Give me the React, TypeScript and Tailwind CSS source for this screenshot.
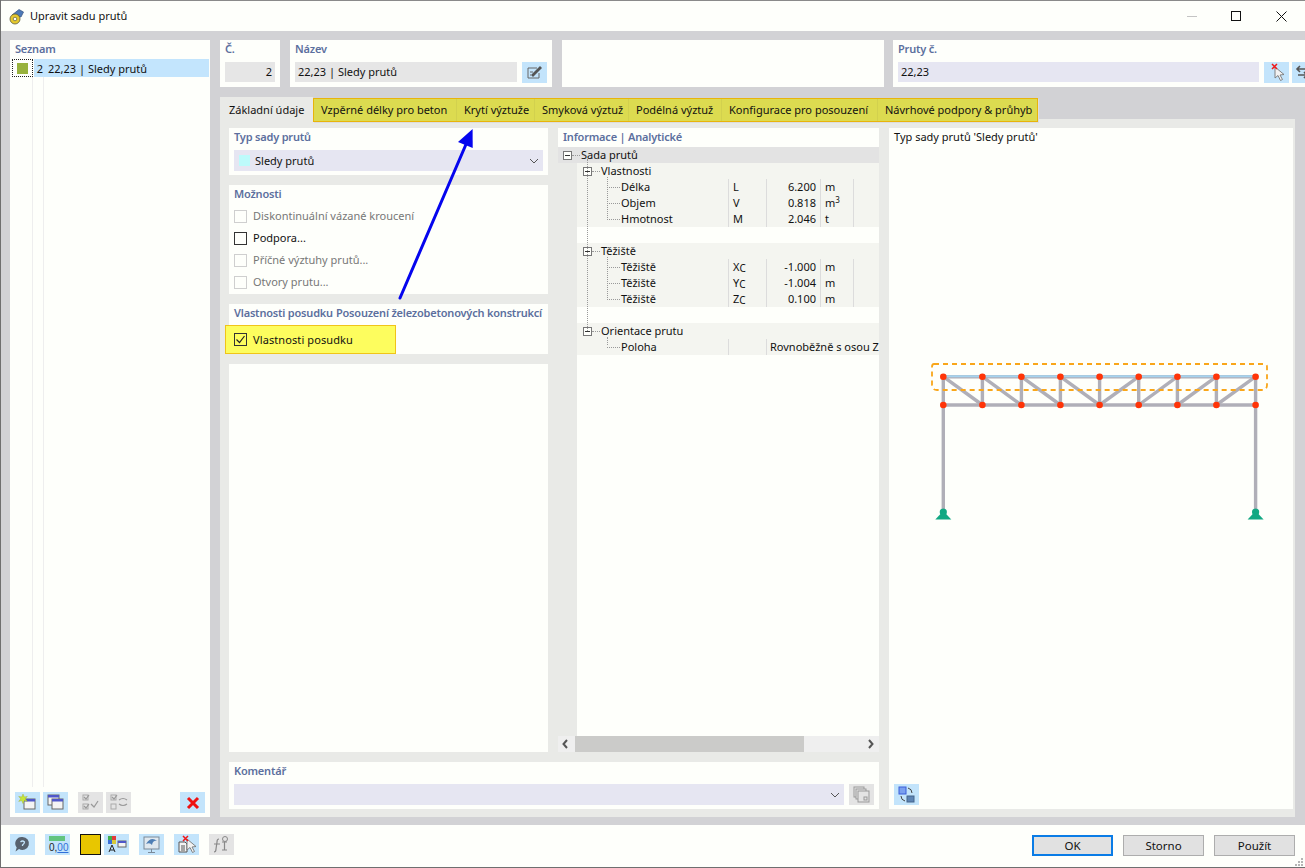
const font = { fontFamily: '"Noto Sans", sans-serif' };

function Check({ on, dim }: { on?: boolean; dim?: boolean }) {
  return (
    <span className={`w-[13px] h-[13px] shrink-0 border flex items-center justify-center ${dim ? "border-[#cfcfcf]" : "border-[#333333]"}`}>
      {on && (
        <svg width="11" height="11" viewBox="0 0 11 11">
          <path d="M1.5 5.5 L4.5 8.5 L9.5 2" fill="none" stroke="#222" strokeWidth="1.2" />
        </svg>
      )}
    </span>
  );
}

function Heading({ children }: { children: React.ReactNode }) {
  return <div className="h-[18px] leading-[16px] font-semibold tracking-[-0.2px] text-[#5c6f9e] whitespace-nowrap">{children}</div>;
}

function Chevron() {
  return (
    <svg width="10" height="6" viewBox="0 0 10 6" className="shrink-0">
      <path d="M1 1 L5 5 L9 1" fill="none" stroke="#555" strokeWidth="1" />
    </svg>
  );
}

function IconBtn({ children, off }: { children: React.ReactNode; off?: boolean }) {
  return (
    <div className={`w-[25px] h-[21px] shrink-0 flex items-center justify-center ${off ? "bg-[#e4e4e4]" : "bg-[#c3e4fb]"}`}>
      {children}
    </div>
  );
}

function WinIcon({ x = 5, y = 6 }: { x?: number; y?: number }) {
  return (
    <>
      <rect x={x} y={y} width="11" height="10" fill="#f4f4f4" stroke="#666" />
      <rect x={x} y={y} width="11" height="2.5" fill="#4f57c9" />
    </>
  );
}

function Cursor({ x, y }: { x: number; y: number }) {
  return <path d={`M${x} ${y} l0 11 l3 -2.5 l2.5 5 l2 -1 l-2.5 -4.5 l4 -.5 z`} fill="#f2f2f2" stroke="#777" strokeWidth=".9" />;
}

function RedX({ x, y }: { x: number; y: number }) {
  return <path d={`M${x} ${y} l5 5 m0 -5 l-5 5`} stroke="#f01818" strokeWidth="1.5" />;
}

type Row = { kind: string; label?: string; sym?: React.ReactNode; val?: string; unit?: React.ReactNode; wide?: string };

const rows: Row[] = [
  { kind: "root", label: "Sada prutů" },
  { kind: "group", label: "Vlastnosti" },
  { kind: "item", label: "Délka", sym: "L", val: "6.200", unit: "m" },
  { kind: "item", label: "Objem", sym: "V", val: "0.818", unit: <>m<sup className="text-[8px] leading-none">3</sup></> },
  { kind: "item", label: "Hmotnost", sym: "M", val: "2.046", unit: "t" },
  { kind: "blank" },
  { kind: "group", label: "Těžiště" },
  { kind: "item", label: "Těžiště", sym: <>X<span className="text-[10px] relative top-[1px]">C</span></>, val: "-1.000", unit: "m" },
  { kind: "item", label: "Těžiště", sym: <>Y<span className="text-[10px] relative top-[1px]">C</span></>, val: "-1.004", unit: "m" },
  { kind: "item", label: "Těžiště", sym: <>Z<span className="text-[10px] relative top-[1px]">C</span></>, val: "0.100", unit: "m" },
  { kind: "blank" },
  { kind: "group", label: "Orientace prutu" },
  { kind: "item", label: "Poloha", wide: "Rovnoběžně s osou Z" },
];

function Expander() {
  return (
    <span className="w-[9px] h-[9px] shrink-0 border border-[#777777] bg-[#fefffb] flex items-center justify-center">
      <span className="w-[5px] h-px bg-[#333333]" />
    </span>
  );
}

function TreeRow({ r }: { r: Row }) {
  if (r.kind === "blank") return <div className="h-4 ml-[19px] bg-[#fefffb]" />;
  if (r.kind === "root")
    return (
      <div className="h-4 bg-[#e3e3e3] flex items-center pl-[5px] text-[#111111]">
        <Expander />
        <span className="w-[8px] border-t border-dotted border-[#999999]" />
        <span className="ml-px">{r.label}</span>
      </div>
    );
  if (r.kind === "group")
    return (
      <div className="h-4 ml-[19px] bg-[#f4f5f0] flex items-center pl-[6px] text-[#111111]">
        <Expander />
        <span className="w-[8px] border-t border-dotted border-[#999999]" />
        <span className="ml-px">{r.label}</span>
      </div>
    );
  return (
    <div className="h-4 ml-[19px] bg-[#f4f5f0] flex items-center text-[#111111] whitespace-nowrap">
      <div className="w-[151px] shrink-0 pl-[30px] flex items-center">
        <span className="w-[13px] border-t border-dotted border-[#999999]" />
        <span className="ml-px">{r.label}</span>
      </div>
      <div className="w-[38px] h-full shrink-0 border-l border-[#dcdcdc] pl-[4px]">{r.sym}</div>
      {r.wide ? (
        <div className="flex-1 h-full border-l border-[#dcdcdc] pl-[3px]">{r.wide}</div>
      ) : (
        <>
          <div className="w-[54px] h-full shrink-0 border-l border-[#dcdcdc] pr-[4px] text-right">{r.val}</div>
          <div className="w-[33px] h-full shrink-0 border-l border-[#dcdcdc] pl-[4px]">{r.unit}</div>
          <div className="flex-1 h-full border-l border-[#dcdcdc]" />
        </>
      )}
    </div>
  );
}

const tabs = [
  { t: "Vzpěrné délky pro beton", w: "w-[142px]" },
  { t: "Krytí výztuže", w: "w-[78px]" },
  { t: "Smyková výztuž", w: "w-[94px]" },
  { t: "Podélná výztuž", w: "w-[93px]" },
  { t: "Konfigurace pro posouzení", w: "w-[156px]" },
  { t: "Návrhové podpory & průhyb", w: "w-[160px]" },
];

function Truss() {
  const top = 376.7;
  const bot = 405;
  const xs = [943.3, 982.4, 1021.4, 1060.4, 1099.6, 1138.7, 1177.4, 1216.4, 1255.6];
  return (
    <svg width="350" height="170" viewBox="925 355 350 170" className="block">
      <g stroke="#b0afb8" strokeWidth="3.4">
        <line x1={xs[0]} y1={bot} x2={xs[8]} y2={bot} />
        <line x1={xs[0]} y1={top} x2={xs[0]} y2="510" />
        <line x1={xs[8]} y1={top} x2={xs[8]} y2="510" />
        {xs.slice(1, 8).map((x) => (
          <line key={x} x1={x} y1={top} x2={x} y2={bot} />
        ))}
        {xs.slice(0, 4).map((x, i) => (
          <line key={x} x1={x} y1={top} x2={xs[i + 1]} y2={bot} />
        ))}
        {xs.slice(4, 8).map((x, i) => (
          <line key={x} x1={x} y1={bot} x2={xs[i + 5]} y2={top} />
        ))}
        <line x1={xs[0]} y1={top} x2={xs[8]} y2={top} />
      </g>
      <line x1={xs[0]} y1={top - 0.5} x2={xs[8]} y2={top - 0.5} stroke="#a6d3ee" strokeWidth="2" />
      <path d="M934 364 H1264 Q1267 364 1267 367 V385 Q1267 390 1262 390 H937 Q932 390 932 385 V367 Q932 364 934 364" fill="none" stroke="#f9a61a" strokeWidth="1.8" strokeDasharray="5 4" />
      {xs.map((x) => (
        <g key={x} fill="#ff3407">
          <circle cx={x} cy={top} r="3.3" />
          <circle cx={x} cy={bot} r="3.3" />
        </g>
      ))}
      {[xs[0], xs[8]].map((x) => (
        <g key={x} fill="#12a883">
          <circle cx={x} cy="512" r="3.6" />
          <path d={`M${x - 8} 519.5 L${x} 511 L${x + 8} 519.5 Z`} />
        </g>
      ))}
    </svg>
  );
}

export default function App() {
  return (
    <div style={font} className="relative w-[1305px] h-[868px] overflow-hidden bg-[#fefffb] text-[11px] leading-4 text-[#111111] flex flex-col border-l border-[#6f6f6f]">
      <div className="h-px bg-[#8a8a8a] shrink-0" />
      {/* title bar */}
      <div className="h-[30px] shrink-0 flex items-center pl-[7px]">
        <svg width="17" height="17" viewBox="0 0 17 17">
          <path d="M4 7 L11 1.5 L15.5 4 L13 9 Z" fill="#4d79b8" stroke="#35507d" strokeWidth=".7" />
          <circle cx="7" cy="11" r="5" fill="#e6c92e" stroke="#5b5b3a" strokeWidth=".8" />
          <circle cx="7" cy="11" r="1.8" fill="#fefffb" stroke="#5b5b3a" strokeWidth=".7" />
        </svg>
        <span className="ml-[5px] text-[11px]">Upravit sadu prutů</span>
        <div className="ml-auto flex items-center">
          <span className="w-[10px] h-px bg-[#c4c4c4]" />
          <span className="ml-[34px] w-[10px] h-[10px] border border-[#111111]" />
          <svg className="ml-[35px] mr-[18px]" width="11" height="11" viewBox="0 0 11 11">
            <path d="M.5 .5 L10.5 10.5 M10.5 .5 L.5 10.5" stroke="#111" strokeWidth="1" />
          </svg>
        </div>
      </div>

      {/* main */}
      <div className="h-[794px] shrink-0 bg-[#d2d2d5] pl-[9px] pt-[9px] pb-[8px] flex gap-[10px] overflow-hidden">
        {/* list */}
        <div className="w-[200px] shrink-0 bg-[#fefffb] flex flex-col">
          <div className="h-[19px] pl-[5px] pt-px">
            <Heading>Seznam</Heading>
          </div>
          <div className="h-[18px] flex items-center">
            <div className="w-[21px] h-[18px] ml-[2px] border border-dotted border-[#222222] flex items-center justify-center">
              <span className="w-[11px] h-[11px] bg-[#98b23c]" />
            </div>
            <div className="flex-1 h-full ml-px mr-px pt-px bg-[#c3e5fd] flex items-center">
              <span className="w-[9px] text-right">2</span>
              <span className="ml-[5px]">22,23 | Sledy prutů</span>
            </div>
          </div>
          <div className="flex-1 flex pl-[22px]">
            <div className="w-[12px] border-l border-r border-[#eeeeee]" />
          </div>
          <div className="h-[30px] flex pl-[5px] pr-[5px] pt-[5px] items-start">
            <IconBtn>
              <svg width="25" height="21" viewBox="0 0 25 21">
                <WinIcon x={9} y={7} />
                <path d="M8 2 l1.3 3 3 -.6 -2 2.4 2 2.6 -3 -.8 -1.3 3 -1.3 -3 -3 .8 2 -2.6 -2 -2.4 3 .6 z" fill="#c6e63a" stroke="#9aa82a" strokeWidth=".4" />
              </svg>
            </IconBtn>
            <div className="ml-[3px]">
              <IconBtn>
                <svg width="25" height="21" viewBox="0 0 25 21">
                  <WinIcon x={5} y={3} />
                  <WinIcon x={9} y={7} />
                </svg>
              </IconBtn>
            </div>
            <div className="ml-[10px]">
              <IconBtn off>
                <svg width="25" height="21" viewBox="0 0 25 21">
                  <rect x="5" y="3" width="5" height="5" fill="none" stroke="#aaa" />
                  <rect x="5" y="12" width="5" height="5" fill="none" stroke="#aaa" />
                  <path d="M6 5 l2 2 3 -4 M6 14 l2 2 3 -4 M13 12 l3 3 4 -6" fill="none" stroke="#999" strokeWidth="1.2" />
                </svg>
              </IconBtn>
            </div>
            <div className="ml-[3px]">
              <IconBtn off>
                <svg width="25" height="21" viewBox="0 0 25 21">
                  <rect x="5" y="3" width="5" height="5" fill="none" stroke="#aaa" />
                  <rect x="5" y="12" width="5" height="5" fill="none" stroke="#aaa" />
                  <path d="M6 5 l2 2 3 -4 M13 8 q4 -3 8 0 M21 12 q-4 3 -8 0" fill="none" stroke="#999" strokeWidth="1.2" />
                </svg>
              </IconBtn>
            </div>
            <div className="ml-auto">
              <IconBtn>
                <svg width="14" height="14" viewBox="0 0 14 14">
                  <path d="M2 2 L12 12 M12 2 L2 12" stroke="#ee1111" strokeWidth="3" />
                </svg>
              </IconBtn>
            </div>
          </div>
        </div>

        {/* right side */}
        <div className="flex-1 min-w-0 flex flex-col">
          <div className="h-[47px] shrink-0 flex">
            <div className="w-[60px] shrink-0 bg-[#fefffb] px-[5px] pt-px">
              <Heading>Č.</Heading>
              <div className="mt-[3px] h-[20px] bg-[#e6e6e6] text-right pr-[3px] leading-5">2</div>
            </div>
            <div className="ml-[10px] w-[262px] shrink-0 bg-[#fefffb] px-[5px] pt-px">
              <Heading>Název</Heading>
              <div className="mt-[3px] flex gap-[5px]">
                <div className="w-[222px] h-[20px] bg-[#e6e6e6] pl-[3px] leading-5">22,23 | Sledy prutů</div>
                <IconBtn>
                  <svg width="25" height="20" viewBox="0 0 25 20">
                    <path d="M6 5 h9 M6 5 v10 h11 v-5" fill="none" stroke="#666" />
                    <path d="M9 12 L18 3 L20 5 L11 14 Z" fill="#555" />
                    <path d="M8 9 h3 M8 12 h1" stroke="#666" />
                  </svg>
                </IconBtn>
              </div>
            </div>
            <div className="ml-[10px] w-[322px] shrink-0 bg-[#fefffb]" />
            <div className="ml-[9px] w-[430px] shrink-0 bg-[#fefffb] px-[5px] pt-px">
              <Heading>Pruty č.</Heading>
              <div className="mt-[3px] flex">
                <div className="w-[361px] shrink-0 h-[20px] bg-[#e6e6f2] pl-[3px] leading-5">22,23</div>
                <div className="ml-[5px]">
                  <IconBtn>
                    <svg width="25" height="21" viewBox="0 0 25 21">
                      <Cursor x={11} y={5} />
                      <RedX x={8} y={2} />
                    </svg>
                  </IconBtn>
                </div>
                <div className="ml-[3px]">
                  <IconBtn>
                    <svg width="25" height="21" viewBox="0 0 25 21">
                      <path d="M14 7 H5 M8 4 L5 7 L8 10 M6 13 H15 M12 10 L15 13 L12 16" fill="none" stroke="#555" strokeWidth="1.6" />
                    </svg>
                  </IconBtn>
                </div>
              </div>
            </div>
          </div>

          {/* tabs */}
          <div className="mt-[10px] h-[22px] shrink-0 flex relative z-10">
            <div className="w-[93px] h-[22px] shrink-0 bg-[#e9eae7] pl-[9px] leading-[26px] text-[#111111]">Základní údaje</div>
            <div className="h-[24px] mt-px flex bg-[#dcdb50] border border-[#e8b40a] shadow-[1px_1px_0_#dddddd]">
              {tabs.map((t, i) => (
                <div key={t.t} className={`${t.w} shrink-0 pl-[7px] leading-[22px] whitespace-nowrap ${i > 0 ? "border-l border-[#d2d14e]" : ""}`}>
                  {t.t}
                </div>
              ))}
            </div>
          </div>

          {/* tab body */}
          <div className="w-[1075px] flex-1 min-h-0 bg-[#e9eae7] pl-[9px] pr-[2px] pt-[9px] pb-[8px] flex gap-[10px]">
            <div className="w-[650px] shrink-0 flex flex-col gap-[10px]">
              <div className="flex-1 min-h-0 flex gap-[10px]">
                <div className="w-[319px] shrink-0 flex flex-col gap-[10px]">
                  <div className="h-[47px] bg-[#fefffb] px-[5px] pt-px">
                    <Heading>Typ sady prutů</Heading>
                    <div className="mt-[3px] h-[21px] bg-[#e6e6f2] flex items-center pl-[5px] pr-[4px]">
                      <span className="w-[11px] h-[11px] bg-[#bdfbfb]" />
                      <span className="ml-[5px]">Sledy prutů</span>
                      <span className="ml-auto"><Chevron /></span>
                    </div>
                  </div>
                  <div className="h-[109px] bg-[#fefffb] px-[5px] pt-px">
                    <Heading>Možnosti</Heading>
                    <div className="mt-px flex flex-col">
                      <div className="h-[22px] flex items-center gap-[6px] text-[#777777]"><Check dim />Diskontinuální vázané kroucení</div>
                      <div className="h-[22px] flex items-center gap-[6px]"><Check />Podpora...</div>
                      <div className="h-[22px] flex items-center gap-[6px] text-[#777777]"><Check dim />Příčné výztuhy prutů...</div>
                      <div className="h-[22px] flex items-center gap-[6px] text-[#777777]"><Check dim />Otvory prutu...</div>
                    </div>
                  </div>
                  <div className="h-[50px] bg-[#fefffb] pt-px">
                    <div className="pl-[5px] flex">
                      <Heading>Vlastnosti posudku</Heading>
                      <span className="ml-[3px]"><Heading>Posouzení železobetonových konstrukcí</Heading></span>
                    </div>
                    <div className="-ml-[4px] mt-[2px] w-[171px] h-[29px] bg-[#fdfd5e] border border-[#f0c419] flex items-center gap-[6px] pl-[8px]">
                      <Check on /><span className="mt-px tracking-[0.1px]">Vlastnosti posudku</span>
                    </div>
                  </div>
                  <div className="flex-1 bg-[#fefffb]" />
                </div>

                <div className="w-[321px] shrink-0 bg-[#fefffb] flex flex-col">
                  <div className="h-[19px] pl-[5px] pt-px shrink-0"><Heading>Informace | Analytické</Heading></div>
                  <div className="flex-1 min-h-0 relative bg-[#fefffb] flex flex-col">
                    <div className="absolute left-0 top-0 bottom-0 w-[19px] bg-[#e9eae7]" />
                    <div className="relative">
                      {rows.map((r, i) => (
                        <TreeRow key={i} r={r} />
                      ))}
                      <div className="absolute left-[29px] top-[12px] h-[172px] border-l border-dotted border-[#999999]" />
                      <div className="absolute left-[49px] top-[30px] h-[41px] border-l border-dotted border-[#999999]" />
                      <div className="absolute left-[49px] top-[110px] h-[41px] border-l border-dotted border-[#999999]" />
                      <div className="absolute left-[49px] top-[190px] h-[8px] border-l border-dotted border-[#999999]" />
                    </div>
                  </div>
                  <div className="relative h-[16px] shrink-0 bg-[#efefef] flex items-center">
                    <svg width="17" height="16" viewBox="0 0 17 16" className="shrink-0">
                      <path d="M9 4 L5.5 8 L9 12" fill="none" stroke="#555" strokeWidth="2" />
                    </svg>
                    <div className="w-[229px] h-full bg-[#cbcbc9]" />
                    <svg width="17" height="16" viewBox="0 0 17 16" className="ml-auto shrink-0">
                      <path d="M7 4 L10.5 8 L7 12" fill="none" stroke="#555" strokeWidth="2" />
                    </svg>
                  </div>
                </div>
              </div>

              <div className="h-[47px] shrink-0 bg-[#fefffb] px-[5px] pt-px">
                <Heading>Komentář</Heading>
                <div className="mt-[3px] flex gap-[5px]">
                  <div className="w-[610px] h-[21px] bg-[#e6e6f2] flex items-center justify-end pr-[4px]"><Chevron /></div>
                  <IconBtn off>
                    <svg width="25" height="21" viewBox="0 0 25 21">
                      <rect x="5" y="3" width="10" height="10" fill="none" stroke="#999" />
                      <rect x="7" y="5" width="10" height="10" fill="#e4e4e4" stroke="#999" />
                      <rect x="9" y="7" width="11" height="11" fill="#e4e4e4" stroke="#999" />
                      <rect x="15" y="13" width="3" height="3" fill="none" stroke="#999" />
                    </svg>
                  </IconBtn>
                </div>
              </div>
            </div>

            <div className="flex-1 min-w-0 bg-[#fefffb] flex flex-col">
              <div className="pl-[5px] pt-px h-[18px] whitespace-nowrap leading-[16px]">Typ sady prutů 'Sledy prutů'</div>
              <div className="mt-[209px] ml-[36px]"><Truss /></div>
              <div className="mt-auto mb-[4px] ml-[5px]">
                <IconBtn>
                  <svg width="25" height="21" viewBox="0 0 25 21">
                    <rect x="5" y="3" width="7" height="7" fill="#7aa0ef" stroke="#3b5fd9" />
                    <rect x="13" y="12" width="7" height="6" fill="#5d84b4" stroke="#44648c" />
                    <path d="M14 4 q4 1 4 5 M11 17 q-4 -1 -4 -5" fill="none" stroke="#444" />
                  </svg>
                </IconBtn>
              </div>
            </div>
          </div>
        </div>
      </div>

      {/* footer */}
      <div className="flex-1 flex items-center pl-[9px] pr-[10px]">
        <div className="flex items-center -mt-[4px]">
          <IconBtn>
            <svg width="25" height="21" viewBox="0 0 25 21">
              <path d="M12.5 3 a6.5 6.5 0 1 1 -3.5 12 l-3.5 2.5 1.2 -4 A6.5 6.5 0 0 1 12.5 3 Z" fill="#58626e" />
              <path d="M10.5 8 q2 -2 4 0 q0 1.5 -2 3 v1" fill="none" stroke="#c3e4fb" strokeWidth="1.3" />
            </svg>
          </IconBtn>
          <div className="ml-[10px]">
            <IconBtn>
              <svg width="25" height="21" viewBox="0 0 25 21">
                <rect x="4" y="2" width="16" height="5" fill="#62c47e" />
                <text x="4" y="17" fontSize="10" fontFamily="Liberation Sans, sans-serif" fill="#222">0,<tspan fill="#2f6fd8" textDecoration="underline">00</tspan></text>
              </svg>
            </IconBtn>
          </div>
          <span className="ml-[10px] w-[21px] h-[21px] bg-[#e8c600] border border-[#111111]" />
          <div className="ml-[3px]">
            <IconBtn>
              <svg width="25" height="21" viewBox="0 0 25 21">
                <rect x="4" y="2" width="4" height="4" fill="#3fae49" />
                <rect x="8" y="2" width="4" height="4" fill="#e23a3a" />
                <rect x="4" y="6" width="4" height="4" fill="#3a6fd8" />
                <rect x="8" y="6" width="4" height="4" fill="#d8c93a" />
                <path d="M8 11 L5 18 M8 11 L11 18 M6 16 h4" stroke="#222" fill="none" />
                <rect x="14" y="7" width="8" height="6" fill="#f4f4f4" stroke="#666" />
                <rect x="14" y="7" width="8" height="2" fill="#4f57c9" />
              </svg>
            </IconBtn>
          </div>
          <div className="ml-[10px]">
            <IconBtn>
              <svg width="25" height="21" viewBox="0 0 25 21">
                <rect x="5" y="3" width="15" height="12" fill="#dfe8ef" stroke="#7a8a99" />
                <path d="M7 10 q5 -8 11 -3 q-4 -1 -5 4 q-2 -3 -6 -1 Z" fill="#4f7fb5" />
                <path d="M12.5 15 v3 M9 18.5 h7" stroke="#7a8a99" />
              </svg>
            </IconBtn>
          </div>
          <div className="ml-[10px]">
            <IconBtn>
              <svg width="25" height="21" viewBox="0 0 25 21">
                <path d="M5 8 h6 l2 2 v8 h-8 z" fill="#f4f4f4" stroke="#555" />
                <path d="M7 12 h4 M7 14 h4 M7 16 h4" stroke="#555" />
                <Cursor x={13} y={5} />
                <RedX x={9} y={2} />
              </svg>
            </IconBtn>
          </div>
          <div className="ml-[10px]">
            <IconBtn off>
              <svg width="25" height="21" viewBox="0 0 25 21">
                <path d="M10 5 q-2 0 -2 3 l-1 7 q0 3 -2 3 M5 10 h6 M13 8 h5 M15.5 8 v8 M13 16 h5" fill="none" stroke="#888" strokeWidth="1.2" />
                <circle cx="16" cy="5" r="2.5" fill="none" stroke="#888" />
              </svg>
            </IconBtn>
          </div>
        </div>
        <div className="ml-auto flex gap-[10px] -mt-[1px] text-[11.5px]">
          <div className="w-[81px] h-[21px] bg-[#e1e1e1] border-2 border-[#0a7ce6] text-center leading-[17px]">OK</div>
          <div className="w-[81px] h-[21px] bg-[#e1e1e1] border border-[#adadad] text-center leading-[19px]">Storno</div>
          <div className="w-[81px] h-[21px] bg-[#e1e1e1] border border-[#adadad] text-center leading-[19px]">Použít</div>
        </div>
      </div>
      <div className="h-px bg-[#6f6f6f] shrink-0" />

      {/* resize grip */}
      <svg className="absolute right-[2px] bottom-[2px]" width="9" height="9" viewBox="0 0 9 9">
        <g fill="#b5b5b5">
          <rect x="7" y="1" width="2" height="2" />
          <rect x="4" y="4" width="2" height="2" />
          <rect x="7" y="4" width="2" height="2" />
          <rect x="1" y="7" width="2" height="2" />
          <rect x="4" y="7" width="2" height="2" />
          <rect x="7" y="7" width="2" height="2" />
        </g>
      </svg>

      {/* annotation arrow */}
      <svg className="absolute left-0 top-0 pointer-events-none z-20" width="1305" height="868" viewBox="0 0 1305 868">
        <line x1="399" y1="298" x2="466" y2="142" stroke="#0505ee" strokeWidth="3" strokeLinecap="round" />
        <path d="M471.6 129 L457 142 L471.7 148 Z" fill="#0505ee" />
      </svg>
    </div>
  );
}
